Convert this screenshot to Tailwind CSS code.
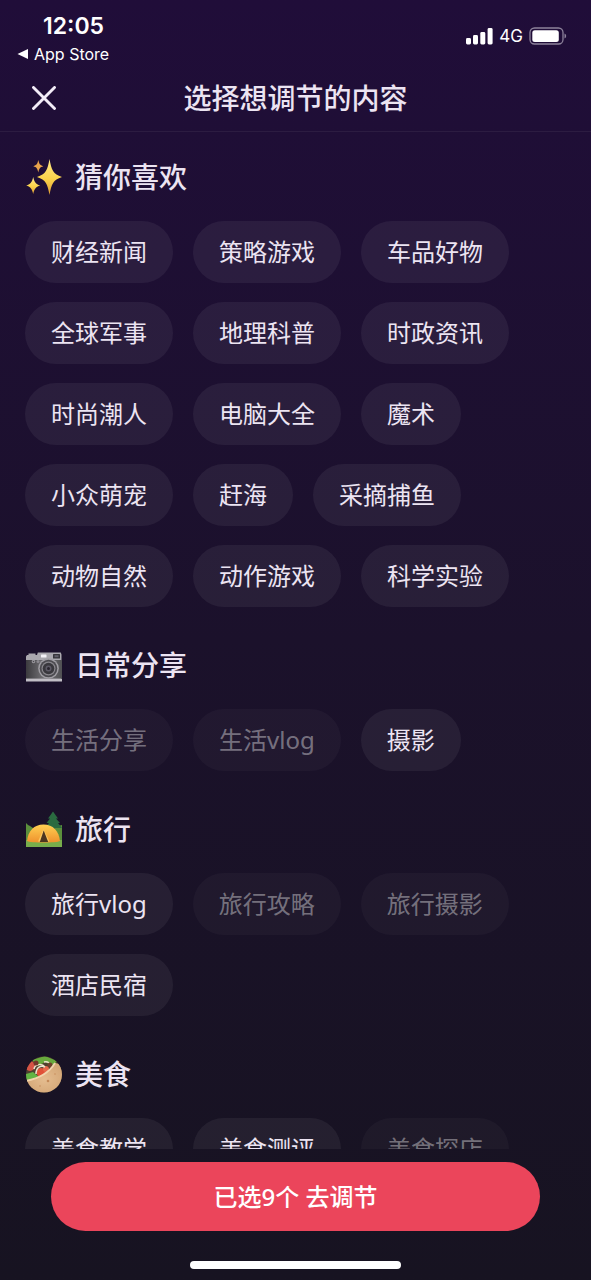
<!DOCTYPE html>
<html lang="zh-CN">
<head>
<meta charset="utf-8">
<meta name="viewport" content="width=device-width, initial-scale=1">
<title>选择想调节的内容</title>
<script src="https://cdn.jsdelivr.net/npm/@tailwindcss/browser@4"></script>
</head>
<body class="flex h-screen flex-col bg-linear-to-b from-[#200d39] via-[#1b112b] to-[#171321] font-['Noto_Sans','Noto_Sans_CJK_SC',sans-serif] text-[#ece4f2]">

<div class="flex h-16 shrink-0 items-start justify-between pr-6 pl-4 font-[Inter,sans-serif] text-white">
  <div class="pt-3">
    <div class="pl-[27px] text-[23px] leading-7 font-semibold">12:05</div>
    <a href="#" class="flex items-center gap-1.5 text-base leading-7">
      <svg class="h-3 w-3" viewBox="0 0 12 12" fill="currentColor" aria-hidden="true"><path d="M1.500 6 12 1v10z"/></svg>
      App Store
    </a>
  </div>
  <div class="flex items-center gap-1.5 pt-6">
    <svg class="h-[18px] w-[27px]" viewBox="0 0 27 18" fill="currentColor" aria-label="信号"><rect x="0" y="11" width="5" height="6.500" rx="1.400"/><rect x="7" y="8" width="5" height="9.500" rx="1.400"/><rect x="14.300" y="5" width="5" height="12.500" rx="1.400"/><rect x="21.600" y="1" width="5" height="16.500" rx="1.400"/></svg>
    <span class="text-[17px] leading-6">4G</span>
    <svg class="h-[18px] w-[38px]" viewBox="0 0 38 18" aria-label="电池"><rect x="1" y="1" width="33" height="16" rx="4.500" fill="none" stroke="#8d829b" stroke-width="1.300"/><rect x="3.300" y="3.200" width="26.500" height="11.800" rx="2.500" fill="#fff"/><path d="M35.500 6.500c2.200.8 2.200 4.200 0 5z" fill="#8d829b"/></svg>
  </div>
</div>

<header class="grid h-17 shrink-0 grid-cols-[56px_1fr_56px] items-center border-b border-white/6 px-4">
  <button type="button" aria-label="关闭" class="flex h-14 w-14 items-center justify-center">
    <svg class="h-6 w-6" viewBox="0 0 24 24" fill="none" stroke="#f3edf8" stroke-width="2.900" stroke-linecap="round"><path d="M1.500 1.500l21 21M22.500 1.500l-21 21"/></svg>
  </button>
  <h1 class="text-center text-[28px] leading-10 font-medium">选择想调节的内容</h1>
</header>

<main class="flex min-h-0 flex-1 flex-col gap-[38px] overflow-y-auto px-[25px] pt-[25px] [scrollbar-width:none]">
  <section>
    <h2 class="mb-6 flex items-center gap-[13px] text-[28px] leading-10 font-medium">
      <svg class="h-[37px] w-[37px]" viewBox="0 0 37 37" aria-hidden="true">
        <defs><linearGradient id="star" x2="0" y2="1"><stop stop-color="#ffe98a"/><stop offset=".55" stop-color="#fbd34a"/><stop offset="1" stop-color="#dc9a35"/></linearGradient></defs>
        <path d="M24.500 0C26.500 11 28 15 37 18 28 21 26.500 25 24.500 36 22.500 25 21 21 12 18 21 15 22.500 11 24.500 0z" fill="url(#star)"/>
        <path d="M8.200 18c1.200 5 2.300 7 7 8.500-4.700 1.500-5.800 3.500-7 8.500-1.200-5-2.300-7-7-8.500 4.700-1.500 5.800-3.500 7-8.500z" fill="url(#star)"/>
        <path d="M13.300 1c.9 3.900 1.600 5.200 5 6.200-3.400 1-4.100 2.300-5 6.200-.9-3.900-1.600-5.200-5-6.200 3.400-1 4.100-2.300 5-6.200z" fill="#e8a34b"/>
      </svg>
      猜你喜欢
    </h2>
    <div class="flex flex-wrap gap-x-5 gap-y-[19px] text-2xl leading-8">
      <button type="button" class="h-[62px] rounded-full bg-white/6 px-[26px]">财经新闻</button>
      <button type="button" class="h-[62px] rounded-full bg-white/6 px-[26px]">策略游戏</button>
      <button type="button" class="h-[62px] rounded-full bg-white/6 px-[26px]">车品好物</button>
      <button type="button" class="h-[62px] rounded-full bg-white/6 px-[26px]">全球军事</button>
      <button type="button" class="h-[62px] rounded-full bg-white/6 px-[26px]">地理科普</button>
      <button type="button" class="h-[62px] rounded-full bg-white/6 px-[26px]">时政资讯</button>
      <button type="button" class="h-[62px] rounded-full bg-white/6 px-[26px]">时尚潮人</button>
      <button type="button" class="h-[62px] rounded-full bg-white/6 px-[26px]">电脑大全</button>
      <button type="button" class="h-[62px] rounded-full bg-white/6 px-[26px]">魔术</button>
      <button type="button" class="h-[62px] rounded-full bg-white/6 px-[26px]">小众萌宠</button>
      <button type="button" class="h-[62px] rounded-full bg-white/6 px-[26px]">赶海</button>
      <button type="button" class="h-[62px] rounded-full bg-white/6 px-[26px]">采摘捕鱼</button>
      <button type="button" class="h-[62px] rounded-full bg-white/6 px-[26px]">动物自然</button>
      <button type="button" class="h-[62px] rounded-full bg-white/6 px-[26px]">动作游戏</button>
      <button type="button" class="h-[62px] rounded-full bg-white/6 px-[26px]">科学实验</button>
    </div>
  </section>

  <section>
    <h2 class="mb-6 flex items-center gap-[13px] text-[28px] leading-10 font-medium">
      <svg class="h-[37px] w-[37px]" viewBox="0 0 37 37" aria-hidden="true">
        <defs><linearGradient id="body" x2="1" y2="0"><stop stop-color="#3b3a3e"/><stop offset=".5" stop-color="#747377"/><stop offset="1" stop-color="#505053"/></linearGradient></defs>
        <path d="M1 9.500 2 8h1.500V6.500h7V8h1.500l.8-2.500h23l.7 2V34H1z" fill="#aaa8ae"/>
        <rect x="1" y="13" width="36" height="18.500" fill="url(#body)"/>
        <rect x="1" y="32" width="36" height="2.500" fill="#c1bec5"/>
        <rect x="16" y="7.500" width="5.500" height="3" rx=".6" fill="#f3f1f6"/>
        <rect x="28" y="7" width="7" height="4.500" rx=".5" fill="#37363b"/><rect x="29.500" y="8.200" width="4" height="2" fill="#625f6a"/>
        <circle cx="8.500" cy="14.500" r="1.700" fill="#9f9da3"/><circle cx="13" cy="14.500" r="1.500" fill="#8c8a90"/><circle cx="8.500" cy="14.500" r=".8" fill="#4c4b50"/>
        <circle cx="23.500" cy="21.500" r="10.300" fill="#a09ea4"/><circle cx="23.500" cy="21.500" r="8.800" fill="#4c4b50"/><circle cx="23.500" cy="21.500" r="7" fill="#88868c"/><circle cx="23.500" cy="21.500" r="5.800" fill="#39383d"/><circle cx="23.500" cy="21.500" r="3" fill="#5d5a66"/><circle cx="23.500" cy="21.500" r="1.500" fill="#29252e"/>
      </svg>
      日常分享
    </h2>
    <div class="flex flex-wrap gap-x-5 gap-y-[19px] text-2xl leading-8">
      <button type="button" disabled class="h-[62px] rounded-full bg-white/3 px-[26px] text-white/40">生活分享</button>
      <button type="button" disabled class="h-[62px] rounded-full bg-white/3 px-[26px] text-white/40">生活vlog</button>
      <button type="button" class="h-[62px] rounded-full bg-white/6 px-[26px]">摄影</button>
    </div>
  </section>

  <section>
    <h2 class="mb-6 flex items-center gap-[13px] text-[28px] leading-10 font-medium">
      <svg class="h-[37px] w-[37px]" viewBox="0 0 37 37" aria-hidden="true">
        <defs><linearGradient id="tent" x2="0" y2="1"><stop stop-color="#ffd052"/><stop offset="1" stop-color="#ef922d"/></linearGradient></defs>
        <path d="M1 12l2 2 2 1 3 2h22l3-2 4-1v22H1z" fill="#5b8f3c"/>
        <path d="M26 20v-4h-5.500l3.500-4H21.500l3.500-4.500h-2L28 .5l5 7h-2l4 4.500h-2l4 5H30v3z" fill="#2a6b40"/>
        <rect x="1" y="29" width="36" height="7" fill="#78ad4b"/>
        <path d="M2 30C3 20 9 13.500 18.500 13.500S34 20 35 30c-3 2-30 2-33 0z" fill="url(#tent)"/>
        <path d="M18.500 18 13 30.500h11.500z" fill="#fbc75f"/>
        <path d="M18.700 19.500 14.800 31h8.400z" fill="#4d3520"/>
      </svg>
      旅行
    </h2>
    <div class="flex flex-wrap gap-x-5 gap-y-[19px] text-2xl leading-8">
      <button type="button" class="h-[62px] rounded-full bg-white/6 px-[26px]">旅行vlog</button>
      <button type="button" disabled class="h-[62px] rounded-full bg-white/3 px-[26px] text-white/40">旅行攻略</button>
      <button type="button" disabled class="h-[62px] rounded-full bg-white/3 px-[26px] text-white/40">旅行摄影</button>
      <button type="button" class="h-[62px] rounded-full bg-white/6 px-[26px]">酒店民宿</button>
    </div>
  </section>

  <section>
    <h2 class="mb-6 flex items-center gap-[13px] text-[28px] leading-10 font-medium">
      <svg class="h-[37px] w-[37px]" viewBox="0 0 37 37" aria-hidden="true">
        <defs><clipPath id="round"><circle cx="19" cy="18.500" r="18"/></clipPath><radialGradient id="bread"><stop stop-color="#e5bd90"/><stop offset="1" stop-color="#d5a878"/></radialGradient></defs>
        <g clip-path="url(#round)">
          <rect width="37" height="37" fill="#4e4230"/>
          <path d="M7 4 20 0l12 5-4 5-8-4-7 4z" fill="#68aa3d"/>
          <path d="M1 18l7-2 6 5-5 5-8-1z" fill="#62b544"/>
          <circle cx="5" cy="10" r="5" fill="#d65445"/><circle cx="16" cy="16.500" r="4.500" fill="#e05138"/><circle cx="21" cy="13" r="3" fill="#e86b4c"/>
          <path d="M9 13c1-5 8-6 11-2M11 18c0-7 5-9 9-7M19 6c4-1 6 1 6 4" stroke="#f0e4cf" stroke-width="1.500" fill="none"/>
          <circle cx="11" cy="7" r="2.500" fill="#74382b"/><circle cx="25" cy="9" r="2.500" fill="#70412d"/>
          <path d="M0 25C12 23 24 17 30 7l9 2v30H0z" fill="url(#bread)"/>
          <path d="M0 25C12 23 24 17 30 7" stroke="#f2d5ae" stroke-width="1.800" fill="none"/>
          <circle cx="23" cy="25" r="1.300" fill="#c58a58"/><circle cx="30" cy="18" r="1" fill="#d09c6c"/><circle cx="15" cy="30" r="1" fill="#d09c6c"/>
        </g>
      </svg>
      美食
    </h2>
    <div class="flex flex-wrap gap-x-5 gap-y-[19px] text-2xl leading-8">
      <button type="button" class="h-[62px] rounded-full bg-white/6 px-[26px]">美食教学</button>
      <button type="button" class="h-[62px] rounded-full bg-white/6 px-[26px]">美食测评</button>
      <button type="button" disabled class="h-[62px] rounded-full bg-white/3 px-[26px] text-white/40">美食探店</button>
    </div>
  </section>
</main>

<footer class="flex shrink-0 flex-col items-center px-[51px] pt-[13px] pb-[11px]">
  <button type="button" class="h-[69px] w-full rounded-full bg-[#eb455b] text-2xl leading-8 font-medium text-white">已选9个 去调节</button>
  <div class="mt-[30px] h-2 w-[211px] rounded-full bg-white"></div>
</footer>
</body>
</html>
